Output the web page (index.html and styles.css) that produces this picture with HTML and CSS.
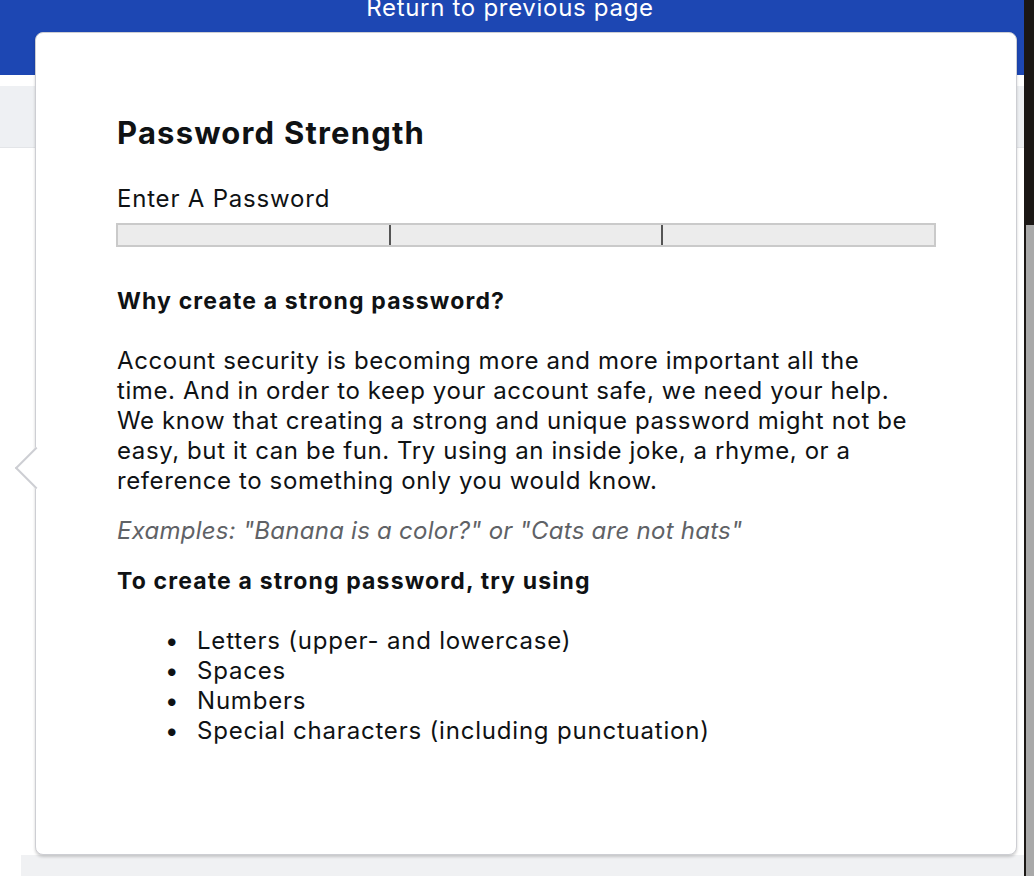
FILE: index.html
```html
<!DOCTYPE html>
<html lang="en">
<head>
<meta charset="utf-8">
<title>Password Strength</title>
<link rel="stylesheet" href="styles.css">
</head>
<body>
<div class="page">
  <div class="main">
    <header class="topbar"><span class="topbar-link">Return to previous page</span></header>
    <div class="gap"></div>
    <div class="subbar"></div>
    <div class="content"></div>
    <div class="panel"></div>
  </div>
  <div class="scrollbar"><div class="scroll-top"></div><div class="scroll-rest"></div></div>
</div>

<div class="popover">
  <div class="arrow"></div>
  <h1 class="title">Password Strength</h1>
  <div class="label">Enter A Password</div>
  <div class="meter">
    <div class="seg"></div>
    <div class="seg"></div>
    <div class="seg"></div>
  </div>
  <h2 class="subhead first">Why create a strong password?</h2>
  <p class="body">Account security is becoming more and more important all the time. And in order to keep your account safe, we need your help. We know that creating a strong and unique password might not be easy, but it can be fun. Try using an inside joke, a rhyme, or a reference to something only you would know.</p>
  <p class="examples">Examples: "Banana is a color?" or "Cats are not hats"</p>
  <h2 class="subhead">To create a strong password, try using</h2>
  <ul class="tips">
    <li>Letters (upper- and lowercase)</li>
    <li>Spaces</li>
    <li>Numbers</li>
    <li>Special characters (including punctuation)</li>
  </ul>
</div>
</body>
</html>
```
FILE: styles.css
```css
html, body {
  margin: 0;
  padding: 0;
  background: #ffffff;
  font-family: Inter, "Noto Sans", "Liberation Sans", sans-serif;
  color: #0f1214;
}
.page {
  display: flex;
  width: 1034px;
  height: 876px;
  overflow: hidden;
}
.main {
  flex: 1;
  display: flex;
  flex-direction: column;
}
.topbar {
  height: 75px;
  background: #1d47b3;
  display: flex;
  justify-content: center;
  align-items: flex-start;
}
.topbar-link {
  color: #ffffff;
  font-size: 24px;
  line-height: 28px;
  letter-spacing: 0.7px;
  margin-top: -6px;
  margin-left: -4px;
}
.gap { height: 11px; }
.subbar {
  height: 61px;
  background: #eef0f3;
  border-bottom: 1px solid #e3e5e8;
}
.content { height: 707px; }
.panel {
  flex: 1;
  margin-left: 21px;
  background: #f0f1f3;
}
.scrollbar {
  width: 10px;
  display: flex;
  flex-direction: column;
}
.scroll-top {
  height: 225px;
  background: #1b1715;
}
.scroll-rest {
  flex: 1;
  background: #a9a9a9;
  border-left: 2px solid #1b1715;
}
.popover {
  position: absolute;
  left: 35px;
  top: 32px;
  width: 980px;
  height: 821px;
  background: #ffffff;
  border: 1px solid #cdced3;
  border-radius: 8px;
  box-shadow: 0 2px 3px rgba(0, 0, 0, 0.18);
}
.arrow {
  position: absolute;
  left: -15px;
  top: 420px;
  width: 28px;
  height: 28px;
  background: #ffffff;
  border-left: 2px solid #cdced3;
  border-bottom: 2px solid #cdced3;
  transform: rotate(45deg);
}
.title {
  margin: 0;
  padding: 80px 0 0 81px;
  font-size: 31px;
  line-height: 40px;
  font-weight: 700;
  letter-spacing: 1.2px;
}
.label {
  margin: 31px 0 0 81px;
  font-size: 24px;
  line-height: 30px;
  letter-spacing: 0.8px;
}
.meter {
  margin: 9px 0 0 80px;
  width: 816px;
  height: 20px;
  display: flex;
  background: #ececec;
  border: 2px solid #cacaca;
}
.seg {
  flex: 1;
  border-left: 2px solid #555555;
}
.seg:first-child { border-left: none; }
.subhead {
  margin: 0 0 0 81px;
  font-size: 23px;
  line-height: 30px;
  font-weight: 700;
  letter-spacing: 1.15px;
}
.subhead.first { margin-top: 39px; }
.body {
  margin: 30px 0 0 81px;
  width: 800px;
  font-size: 24px;
  line-height: 30px;
  letter-spacing: 0.6px;
}
.examples {
  margin: 20px 0 0 81px;
  font-size: 24px;
  line-height: 30px;
  letter-spacing: 0.25px;
  font-style: italic;
  color: #5f6266;
}
.examples + .subhead { margin-top: 20px; }
.tips {
  list-style: none;
  margin: 30px 0 0 81px;
  padding: 0 0 0 80px;
  font-size: 24px;
  line-height: 30px;
  letter-spacing: 0.8px;
}
.tips li {
  display: flex;
}
.tips li::before {
  content: "\2022";
  width: 32px;
  margin-left: -32px;
  font-size: 24px;
}
```
